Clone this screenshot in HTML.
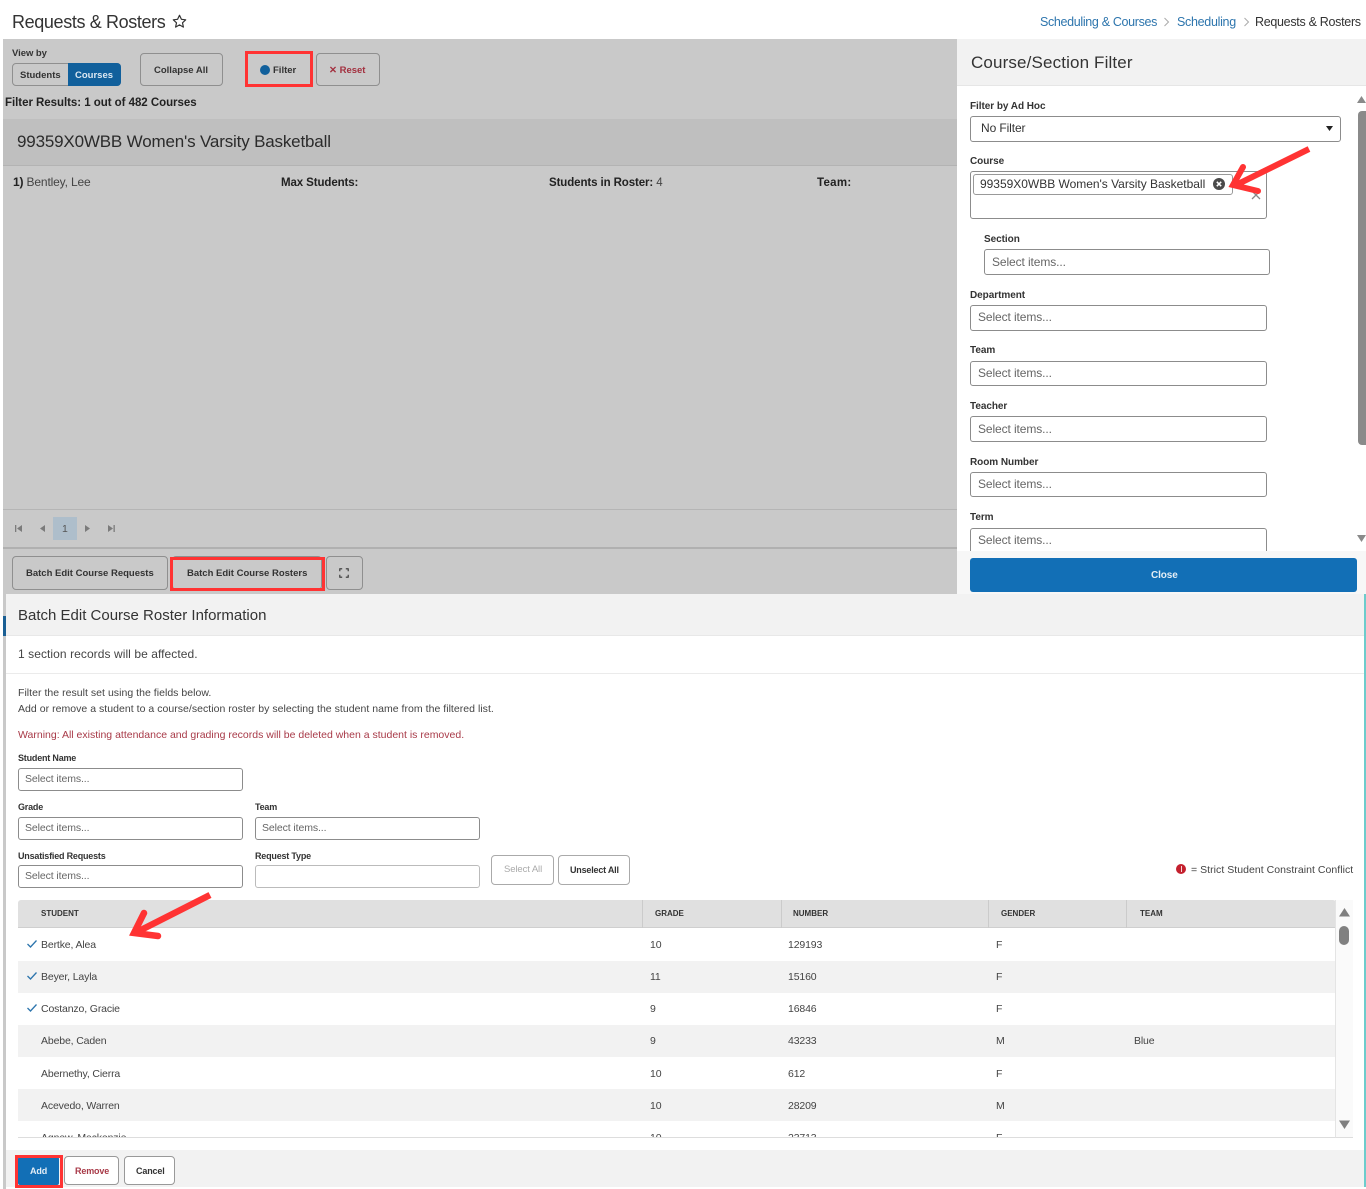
<!DOCTYPE html>
<html lang="en"><head><meta charset="utf-8"><title>Requests &amp; Rosters</title>
<style>
html,body{margin:0;padding:0;background:#fff}
#p{position:relative;width:1366px;height:1189px;overflow:hidden;background:#fff;font-family:"Liberation Sans",sans-serif;color:#333}
#p div,#p span.t{position:absolute;box-sizing:border-box}
.t{white-space:nowrap;line-height:16px;font-size:11.5px;letter-spacing:-.1px}
.b{font-weight:bold}
.lb{font-weight:bold;font-size:10px;color:#333;letter-spacing:-.05px}
.lb2{font-weight:bold;font-size:9px;color:#333;letter-spacing:-.2px}
.in{background:#fff;border:1px solid #8c8c8c;border-radius:3px}
.ph{color:#666;font-size:12px}
.btn{border:1px solid #8f8f8f;border-radius:4px}
.btn2{background:#fff;border:1px solid #aaa;border-radius:4px}
.bt{font-weight:bold;font-size:9.5px;color:#333;letter-spacing:0}
.td{font-size:10.5px;color:#444;letter-spacing:-.14px}
.th{font-weight:bold;font-size:8px;color:#333;letter-spacing:0}
.msg{font-size:10.5px;color:#444;letter-spacing:.03px}
</style></head><body><div id="p">

<span class="t" style="left:12px;top:12px;font-size:18px;line-height:20px;color:#333;letter-spacing:-.37px">Requests &amp; Rosters</span>
<svg style="position:absolute;left:172px;top:14px" width="15" height="15" viewBox="0 0 15 15"><path d="M7.5 1.3l1.9 4 4.3.5-3.2 3 .9 4.3-3.900-2.200-3.900 2.200.9-4.300-3.200-3 4.300-.5z" fill="none" stroke="#333" stroke-width="1.200" stroke-linejoin="round"/></svg>
<span class="t" style="left:1040px;top:14px;font-size:12.5px;color:#2d75ad;letter-spacing:-.33px">Scheduling &amp; Courses</span>
<span class="t" style="left:1177px;top:14px;font-size:12.5px;color:#2d75ad;letter-spacing:-.3px">Scheduling</span>
<span class="t" style="left:1255px;top:14px;font-size:12.5px;color:#333;letter-spacing:-.3px">Requests &amp; Rosters</span>
<svg style="position:absolute;left:1163px;top:17px" width="8" height="10" viewBox="0 0 8 10"><path d="M1.500 1l4 4-4 4" fill="none" stroke="#aaa" stroke-width="1"/></svg>
<svg style="position:absolute;left:1243px;top:17px" width="8" height="10" viewBox="0 0 8 10"><path d="M1.500 1l4 4-4 4" fill="none" stroke="#aaa" stroke-width="1"/></svg>

<!-- gray main -->
<div style="left:3px;top:39px;width:954px;height:555px;background:#c9c9c9"></div>
<span class="t lb" style="left:12px;top:46px;font-size:9.500px">View by</span>
<div class="btn" style="left:12px;top:63px;width:109px;height:23px;border-radius:4px"></div>
<div style="left:68px;top:63px;width:53px;height:23px;background:#11609c;border-radius:0 4px 4px 0"></div>
<span class="t bt" style="left:20px;top:68px;color:#333">Students</span>
<span class="t bt" style="left:75px;top:68px;color:#dce8f2">Courses</span>
<div class="btn" style="left:140px;top:53px;width:83px;height:33px"></div>
<span class="t bt" style="left:154px;top:63px">Collapse All</span>
<div style="left:245px;top:51px;width:68px;height:36px;border:3px solid #ff3333"></div>
<div style="left:260px;top:65px;width:10px;height:10px;border-radius:50%;background:#11609c"></div>
<span class="t bt" style="left:273px;top:63px">Filter</span>
<div class="btn" style="left:316px;top:53px;width:64px;height:33px"></div>
<span class="t bt" style="left:329px;top:63px;color:#a3303f">✕ Reset</span>
<span class="t b" style="left:5px;top:95px;font-size:11.5px;color:#222;letter-spacing:-.04px">Filter Results: 1 out of 482 Courses</span>
<div style="left:3px;top:119px;width:954px;height:47px;background:#bfbfbf;border-bottom:1px solid #b3b3b3"></div>
<span class="t" style="left:17px;top:132px;font-size:17px;line-height:20px;color:#2b2b2b;letter-spacing:-.17px">99359X0WBB Women's Varsity Basketball</span>
<span class="t" style="left:13px;top:174px;font-size:12px;color:#444;letter-spacing:-.15px"><b style="color:#222">1)</b> Bentley, Lee</span>
<span class="t b" style="left:281px;top:175px;font-size:11.5px;color:#222">Max Students:</span>
<span class="t" style="left:549px;top:175px;font-size:11.5px;color:#444"><b style="color:#222">Students in Roster:</b> 4</span>
<span class="t b" style="left:817px;top:175px;font-size:11.5px;color:#222;letter-spacing:.3px">Team:</span>

<div style="left:3px;top:509px;width:954px;height:1px;background:#b5b5b5"></div>
<svg style="position:absolute;left:12px;top:523px" width="110" height="12" viewBox="0 0 110 12" fill="#7b7b7b"><path d="M3 2h1.300v7H3zM10 2v7L5 5.500zM33 2v7l-5-3.500zM73 2l5 3.500-5 3.500zM96 2l5 3.500-5 3.500zM101.500 2h1.300v7h-1.300z"/></svg>
<div style="left:53px;top:517px;width:24px;height:23px;background:#aebecb"></div>
<span class="t" style="left:62px;top:521px;font-size:10.500px;color:#555">1</span>
<div style="left:3px;top:547px;width:954px;height:2px;background:#b0b0b0"></div>
<div class="btn" style="left:12px;top:556px;width:156px;height:34px"></div>
<span class="t bt" style="left:26px;top:566px">Batch Edit Course Requests</span>
<div class="btn" style="left:172px;top:556px;width:150px;height:34px"></div>
<span class="t bt" style="left:187px;top:566px">Batch Edit Course Rosters</span>
<div style="left:170px;top:557px;width:155px;height:34px;border:3px solid #ff3333"></div>
<div class="btn" style="left:326px;top:556px;width:37px;height:34px"></div>
<svg style="position:absolute;left:339px;top:568px" width="10" height="10" viewBox="0 0 10 10"><path d="M.8 3.200V.8h2.400M6.800.8h2.400v2.400M9.200 6.800v2.400H6.800M3.200 9.200H.8V6.800" fill="none" stroke="#333" stroke-width="1.100"/></svg>

<!-- right panel -->
<div style="left:957px;top:39px;width:409px;height:47px;background:#f2f2f2;border-bottom:1px solid #e6e6e6"></div>
<span class="t" style="left:971px;top:53px;font-size:17px;line-height:20px;color:#333;letter-spacing:.14px">Course/Section Filter</span>
<span class="t lb" style="left:970px;top:99px">Filter by Ad Hoc</span>
<div class="in" style="left:970px;top:116px;width:371px;height:26px"></div>
<span class="t" style="left:981px;top:120px;font-size:12px;color:#333">No Filter</span>
<svg style="position:absolute;left:1326px;top:126px" width="8" height="6"><path d="M0 0h7L3.500 5z" fill="#222"/></svg>
<span class="t lb" style="left:970px;top:154px">Course</span>
<div class="in" style="left:970px;top:171px;width:297px;height:48px"></div>
<div style="left:973px;top:174px;width:260px;height:21px;border:1px solid #999;border-radius:3px;background:#fff"></div>
<span class="t" style="left:980px;top:176px;font-size:12px;color:#333;letter-spacing:-.02px">99359X0WBB Women's Varsity Basketball</span>
<div style="left:1213px;top:178px;width:12px;height:12px;border-radius:50%;background:#4a4a4a"></div>
<svg style="position:absolute;left:1213px;top:178px" width="12" height="12"><path d="M3.800 3.800l4.400 4.400M8.200 3.800L3.800 8.200" stroke="#fff" stroke-width="1.500"/></svg>
<svg style="position:absolute;left:1251px;top:190px" width="10" height="10"><path d="M1 1l8 8M9 1L1 9" stroke="#888" stroke-width="1.300"/></svg>
<span class="t lb" style="left:984px;top:232px">Section</span>
<div class="in" style="left:984px;top:249px;width:286px;height:26px"></div>
<span class="t ph" style="left:992px;top:254px">Select items...</span>
<span class="t lb" style="left:970px;top:288px">Department</span>
<div class="in" style="left:970px;top:305px;width:297px;height:26px"></div>
<span class="t ph" style="left:978px;top:309px">Select items...</span>
<span class="t lb" style="left:970px;top:343px">Team</span>
<div class="in" style="left:970px;top:361px;width:297px;height:25px"></div>
<span class="t ph" style="left:978px;top:365px">Select items...</span>
<span class="t lb" style="left:970px;top:399px">Teacher</span>
<div class="in" style="left:970px;top:416px;width:297px;height:26px"></div>
<span class="t ph" style="left:978px;top:421px">Select items...</span>
<span class="t lb" style="left:970px;top:455px">Room Number</span>
<div class="in" style="left:970px;top:472px;width:297px;height:25px"></div>
<span class="t ph" style="left:978px;top:476px">Select items...</span>
<span class="t lb" style="left:970px;top:510px">Term</span>
<div class="in" style="left:970px;top:528px;width:297px;height:30px"></div>
<span class="t ph" style="left:978px;top:532px">Select items...</span>
<svg style="position:absolute;left:1357px;top:96px" width="9" height="8"><path d="M4.500 0L9 7H0z" fill="#8a8a8a"/></svg>
<div style="left:1358px;top:111px;width:8px;height:334px;background:#8a8a8a;border-radius:4px 0 0 4px"></div>
<svg style="position:absolute;left:1357px;top:535px" width="9" height="8"><path d="M0 0h9L4.500 7z" fill="#8a8a8a"/></svg>
<div style="left:957px;top:551px;width:409px;height:43px;background:#f7f7f7"></div>
<div style="left:970px;top:558px;width:387px;height:34px;background:#126fb6;border-radius:3px"></div>
<span class="t" style="left:1151px;top:568px;font-size:10px;font-weight:bold;color:#e4eef6">Close</span>

<!-- arrow 1 -->
<svg style="position:absolute;left:1226px;top:144px" width="90" height="56" viewBox="0 0 90 56"><path d="M83 5L10 41" stroke="#ff3333" stroke-width="6" stroke-linecap="butt"/><path d="M17 23L7 41l25 6" fill="none" stroke="#ff3333" stroke-width="6" stroke-linecap="round" stroke-linejoin="miter"/></svg>

<!-- batch panel -->
<div style="left:3px;top:594px;width:3px;height:595px;background:#c9c9c9"></div>
<div style="left:3px;top:616px;width:3px;height:20px;background:#1a5f94"></div>
<div style="left:6px;top:594px;width:1360px;height:595px;background:#fff"></div>
<div style="left:6px;top:594px;width:1358px;height:42px;background:#f2f2f2;border-bottom:1px solid #e8e8e8"></div>
<div style="left:1364px;top:594px;width:2px;height:593px;background:#6dcccc"></div>
<span class="t" style="left:18px;top:606px;font-size:15px;line-height:20px;color:#333;letter-spacing:0">Batch Edit Course Roster Information</span>
<span class="t" style="left:18px;top:646px;font-size:12px;color:#444;letter-spacing:.07px">1 section records will be affected.</span>
<div style="left:6px;top:673px;width:1358px;height:1px;background:#ebebeb"></div>
<span class="t msg" style="left:18px;top:685px">Filter the result set using the fields below.</span>
<span class="t msg" style="left:18px;top:701px">Add or remove a student to a course/section roster by selecting the student name from the filtered list.</span>
<span class="t msg" style="left:18px;top:727px;color:#a83a48;letter-spacing:0">Warning: All existing attendance and grading records will be deleted when a student is removed.</span>

<span class="t lb2" style="left:18px;top:750px">Student Name</span>
<div class="in" style="left:18px;top:768px;width:225px;height:23px"></div>
<span class="t" style="left:25px;top:771px;font-size:10.500px;color:#666">Select items...</span>
<span class="t lb2" style="left:18px;top:799px">Grade</span>
<div class="in" style="left:18px;top:817px;width:225px;height:23px"></div>
<span class="t" style="left:25px;top:820px;font-size:10.500px;color:#666">Select items...</span>
<span class="t lb2" style="left:255px;top:799px">Team</span>
<div class="in" style="left:255px;top:817px;width:225px;height:23px"></div>
<span class="t" style="left:262px;top:820px;font-size:10.500px;color:#666">Select items...</span>
<span class="t lb2" style="left:18px;top:848px">Unsatisfied Requests</span>
<div class="in" style="left:18px;top:865px;width:225px;height:23px"></div>
<span class="t" style="left:25px;top:868px;font-size:10.500px;color:#666">Select items...</span>
<span class="t lb2" style="left:255px;top:848px">Request Type</span>
<div class="in" style="left:255px;top:865px;width:225px;height:23px;border-color:#bbb"></div>
<div class="btn2" style="left:491px;top:855px;width:63px;height:30px"></div>
<span class="t" style="left:504px;top:862px;font-size:9.500px;color:#aaa">Select All</span>
<div class="btn2" style="left:558px;top:855px;width:72px;height:30px"></div>
<span class="t lb2" style="left:570px;top:862px">Unselect All</span>
<div style="left:1176px;top:864px;width:10px;height:10px;border-radius:50%;background:#c4202e"></div>
<div style="left:1180.500px;top:866px;width:1px;height:6px;background:#f5d5d5"></div>
<span class="t" style="left:1191px;top:862px;font-size:10.500px;color:#444;letter-spacing:.04px">= Strict Student Constraint Conflict</span>

<!-- table -->
<div style="left:1336px;top:900px;width:17px;height:238px;background:#fafafa"></div>
<div style="left:18px;top:900px;width:1318px;height:238px;border-bottom:1px solid #ddd;border-right:1px solid #e4e4e4;overflow:hidden;background:#fff">
<div style="left:0;top:0;width:1318px;height:28px;background:#e0e0e0;border-bottom:1px solid #cfcfcf;border-radius:3px 3px 0 0"></div>
<div style="left:624px;top:0;width:1px;height:28px;background:#cbcbcb"></div>
<div style="left:763px;top:0;width:1px;height:28px;background:#cbcbcb"></div>
<div style="left:970px;top:0;width:1px;height:28px;background:#cbcbcb"></div>
<div style="left:1108px;top:0;width:1px;height:28px;background:#cbcbcb"></div>
<div style="left:0;top:61px;width:1318px;height:32px;background:#f2f2f2"></div>
<div style="left:0;top:125px;width:1318px;height:32px;background:#f2f2f2"></div>
<div style="left:0;top:189px;width:1318px;height:32px;background:#f2f2f2"></div>
</div>
<span class="t th" style="left:41px;top:906px">STUDENT</span>
<span class="t th" style="left:655px;top:906px">GRADE</span>
<span class="t th" style="left:793px;top:906px">NUMBER</span>
<span class="t th" style="left:1001px;top:906px">GENDER</span>
<span class="t th" style="left:1140px;top:906px">TEAM</span>

<svg style="position:absolute;left:26px;top:939px" width="12" height="10"><path d="M1.500 5l3 3 6-6.500" fill="none" stroke="#2d75ad" stroke-width="1.300"/></svg>
<svg style="position:absolute;left:26px;top:971px" width="12" height="10"><path d="M1.500 5l3 3 6-6.500" fill="none" stroke="#2d75ad" stroke-width="1.300"/></svg>
<svg style="position:absolute;left:26px;top:1003px" width="12" height="10"><path d="M1.500 5l3 3 6-6.500" fill="none" stroke="#2d75ad" stroke-width="1.300"/></svg>

<span class="t td" style="left:41px;top:937px">Bertke, Alea</span><span class="t td" style="left:650px;top:937px">10</span><span class="t td" style="left:788px;top:937px">129193</span><span class="t td" style="left:996px;top:937px">F</span>
<span class="t td" style="left:41px;top:969px">Beyer, Layla</span><span class="t td" style="left:650px;top:969px">11</span><span class="t td" style="left:788px;top:969px">15160</span><span class="t td" style="left:996px;top:969px">F</span>
<span class="t td" style="left:41px;top:1001px">Costanzo, Gracie</span><span class="t td" style="left:650px;top:1001px">9</span><span class="t td" style="left:788px;top:1001px">16846</span><span class="t td" style="left:996px;top:1001px">F</span>
<span class="t td" style="left:41px;top:1033px">Abebe, Caden</span><span class="t td" style="left:650px;top:1033px">9</span><span class="t td" style="left:788px;top:1033px">43233</span><span class="t td" style="left:996px;top:1033px">M</span><span class="t td" style="left:1134px;top:1033px">Blue</span>
<span class="t td" style="left:41px;top:1066px">Abernethy, Cierra</span><span class="t td" style="left:650px;top:1066px">10</span><span class="t td" style="left:788px;top:1066px">612</span><span class="t td" style="left:996px;top:1066px">F</span>
<span class="t td" style="left:41px;top:1098px">Acevedo, Warren</span><span class="t td" style="left:650px;top:1098px">10</span><span class="t td" style="left:788px;top:1098px">28209</span><span class="t td" style="left:996px;top:1098px">M</span>
<div style="left:18px;top:1129px;width:1318px;height:8px;overflow:hidden">
<span class="t td" style="left:23px;top:1px">Agnew, Mackenzie</span><span class="t td" style="left:632px;top:1px">10</span><span class="t td" style="left:770px;top:1px">23713</span><span class="t td" style="left:978px;top:1px">F</span>
</div>
<svg style="position:absolute;left:1338px;top:908px" width="13" height="10"><path d="M6.500 0L12 8.500H1z" fill="#808080"/></svg>
<div style="left:1339px;top:926px;width:10px;height:19px;background:#808080;border-radius:5px"></div>
<svg style="position:absolute;left:1338px;top:1120px" width="13" height="10"><path d="M1 .5h11L6.500 9z" fill="#808080"/></svg>
<div style="left:1336px;top:1137px;width:17px;height:1px;background:#ddd"></div>

<!-- arrow 2 -->
<svg style="position:absolute;left:125px;top:885px" width="95" height="60" viewBox="0 0 95 60"><path d="M85 10L12 47" stroke="#ff3333" stroke-width="6.500"/><path d="M19 28L9 48l24 3" fill="none" stroke="#ff3333" stroke-width="6.500" stroke-linecap="round"/></svg>

<!-- footer -->
<div style="left:6px;top:1150px;width:1358px;height:37px;background:#f2f2f2"></div>
<div style="left:18px;top:1157px;width:41px;height:28px;background:#126fb6;border-radius:2px"></div>
<span class="t" style="left:30px;top:1163px;font-size:9px;font-weight:bold;color:#e4eef6">Add</span>
<div style="left:15px;top:1155px;width:48px;height:33px;border:3px solid #ff3333"></div>
<div class="btn2" style="left:64px;top:1156px;width:55px;height:29px;border-color:#999"></div>
<span class="t" style="left:75px;top:1163px;font-size:9px;font-weight:bold;color:#a83a48;letter-spacing:-.15px">Remove</span>
<div class="btn2" style="left:124px;top:1156px;width:51px;height:29px;border-color:#999"></div>
<span class="t" style="left:136px;top:1163px;font-size:9px;font-weight:bold;color:#333;letter-spacing:-.15px">Cancel</span>

</div></body></html>
